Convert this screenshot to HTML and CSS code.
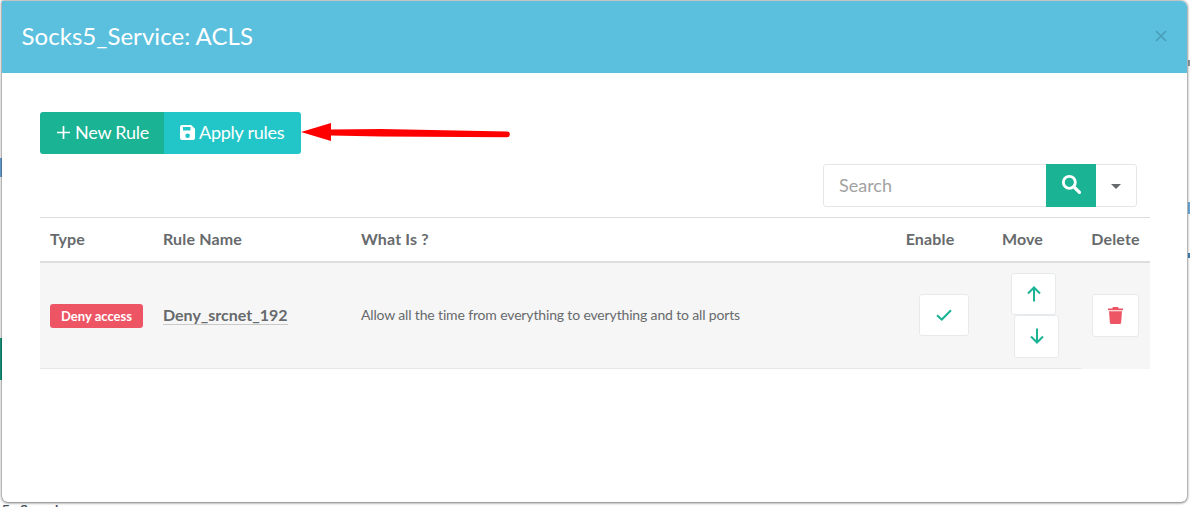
FILE: index.html
```html
<!DOCTYPE html>
<html lang="en">
<head>
<meta charset="utf-8">
<title>Socks5_Service: ACLS</title>
<link rel="stylesheet" href="styles.css">
</head>
<body>
<div class="backdrop" aria-hidden="true">
  <i class="strip s-green"></i>
  <i class="strip s-blue"></i>
  <i class="strip s-rblue"></i>
  <i class="strip s-rblue2"></i>
  <i class="strip s-rgray"></i>
  <span class="behind-text">5_Service</span>
</div>
<div class="modal">
  <header class="modal-head">
    <h4 class="modal-title">Socks5_Service: ACLS</h4>
    <span class="close" aria-label="Close"><svg width="12" height="12" viewBox="0 0 12 12"><path d="M1 1l10 10M11 1L1 11" stroke="#4a9db6" stroke-width="1.6" fill="none"/></svg></span>
  </header>
  <div class="modal-body">
    <div class="actions">
      <button class="btn btn-new"><svg class="ico" width="15" height="15" viewBox="0 0 15 15"><path d="M7.5 1v13M1 7.500h13" stroke="#fff" stroke-width="1.7" fill="none"/></svg>New Rule</button>
      <button class="btn btn-apply"><svg class="ico" width="15" height="15" viewBox="0 0 15 15"><path fill="#fff" fill-rule="evenodd" d="M2 0h9.200L15 3.800V13a2 2 0 0 1-2 2H2a2 2 0 0 1-2-2V2a2 2 0 0 1 2-2zm1 2v3.600h7.500V2zm4.600 6.400a2.300 2.300 0 1 0 0 4.600 2.300 2.300 0 0 0 0-4.600z"/></svg>Apply rules</button>
    </div>
    <div class="toolbar">
      <div class="search">
        <span class="search-input">Search</span>
        <span class="search-btn"><svg width="20" height="20" viewBox="0 0 18 18"><circle cx="7.500" cy="7.500" r="5.400" stroke="#fff" stroke-width="2.600" fill="none"/><path d="M11.600 11.600l5 5" stroke="#fff" stroke-width="3" stroke-linecap="round"/></svg></span>
        <span class="search-drop"><i class="caret"></i></span>
      </div>
    </div>
    <table class="rules">
      <colgroup><col class="c1"><col class="c2"><col class="c3"><col class="c4"><col class="c5"><col class="c6"></colgroup>
      <thead>
        <tr><th>Type</th><th>Rule Name</th><th>What Is ?</th><th class="ctr th-enable">Enable</th><th class="ctr th-move">Move</th><th class="ctr">Delete</th></tr>
      </thead>
      <tbody>
        <tr>
          <td><span class="label">Deny access</span></td>
          <td><a class="rule-name">Deny_srcnet_192</a></td>
          <td class="desc">Allow all the time from everything to everything and to all ports</td>
          <td class="ctr"><span class="sq sq-en"><svg width="16" height="12" viewBox="0 0 16 12"><path d="M1 6.200l4.800 4.300L15 1.200" stroke="#1ab394" stroke-width="2" fill="none"/></svg></span></td>
          <td class="move">
            <span class="sq sq-up"><svg width="14" height="16" viewBox="0 0 14 16"><path d="M7 15.500V1.800M1 7.500l6-6 6 6" stroke="#1ab394" stroke-width="2" fill="none"/></svg></span>
            <span class="sq sq-down"><svg width="14" height="16" viewBox="0 0 14 16"><path d="M7 .5v13.700M1 8.500l6 6 6-6" stroke="#1ab394" stroke-width="2" fill="none"/></svg></span>
          </td>
          <td class="ctr"><span class="sq sq-del"><svg width="15" height="17" viewBox="0 0 15 17"><path fill="#ed5565" d="M5 0h5l.8 1.400H15v1.800H0V1.400h4.200zM1 4.300h13l-.9 11.400a1.400 1.400 0 0 1-1.400 1.300H3.300a1.400 1.400 0 0 1-1.400-1.300z"/></svg></span></td>
        </tr>
      </tbody>
    </table>
  </div>
  <svg class="arrow" width="210" height="26" viewBox="0 0 210 26"><path d="M0 12L30 3v6.500L80 9l126 2.400a2.900 2.900 0 0 1 0 5.800L80 16.500 30 15.500V21z" fill="#ff0000"/></svg>
</div>
</body>
</html>
```
FILE: styles.css
```css
* { box-sizing: border-box; }
html, body { margin: 0; padding: 0; }
body {
  position: relative;
  background: #fff;
  font-family: Lato, "Open Sans", "Liberation Sans", sans-serif;
  color: #676a6c;
  height: 507px;
  overflow: hidden;
}
.backdrop { position: absolute; inset: 0; overflow: hidden; }
.strip { position: absolute; display: block; }
.s-green { left: 0; top: 338px; width: 2px; height: 42px; background: #1a9f85; }
.s-blue { left: 0; top: 158px; width: 2px; height: 19px; background: #6fa8dc; }
.s-rblue { right: 0; top: 202px; width: 2px; height: 12px; background: #6fa8dc; }
.s-rblue2 { right: 0; top: 253px; width: 2px; height: 5px; background: #3f7fb5; }
.s-rgray { right: 0; top: 60px; width: 2px; height: 6px; background: #8a99a3; }
.behind-text {
  position: absolute;
  left: 1px;
  top: 500px;
  font-size: 16px;
  line-height: 20px;
  letter-spacing: 1px;
  color: #44505a;
}
.modal {
  position: relative;
  margin: 1px 3px 0 2px;
  height: 501px;
  background: #fff;
  border-radius: 0 6px 6px 6px;
  box-shadow: 0 0 3px rgba(0, 0, 0, .55), 0 1px 3px rgba(0, 0, 0, .35);
  overflow: hidden;
}
.modal-head {
  height: 72px;
  background: #5bc0de;
  display: flex;
  align-items: center;
  justify-content: space-between;
  padding: 0 20px 0 19.500px;
}
.modal-title {
  margin: -2px 0 0;
  font-size: 24px;
  font-weight: 400;
  line-height: 72px;
  letter-spacing: .05px;
  color: #fff;
}
.close { display: flex; margin-top: -3px; margin-right: 0; }
.modal-body { padding: 39px 37px 0 38px; }
.actions { display: flex; height: 42px; }
.btn {
  border: 0;
  height: 42px;
  color: #fff;
  font: 400 18px Lato, sans-serif;
  letter-spacing: -.25px;
  display: flex;
  align-items: center;
  padding: 0 0 2px;
}
.ico { margin-right: 4px; margin-top: 1px; }
.btn-new { background: #1ab394; width: 124px; border-radius: 3px 0 0 3px; padding-left: 16px; }
.btn-apply { background: #23c6c8; width: 137px; border-radius: 0 3px 3px 0; padding-left: 16px; }
.toolbar { display: flex; justify-content: flex-end; margin: 10px 13px 10px 0; }
.search {
  display: flex;
  width: 314px;
  height: 43px;
  border: 1px solid #e5e6e7;
  border-radius: 3px;
}
.search-input {
  width: 222px;
  padding-left: 15px;
  font-size: 18px;
  line-height: 41px;
  color: #a2a2a2;
}
.search-btn {
  width: 50px;
  height: 43px;
  margin-top: -1px;
  background: #1ab394;
  display: flex;
  align-items: center;
  justify-content: center;
  padding-bottom: 3px;
}
.search-drop { flex: 1; display: flex; align-items: center; justify-content: center; }
.caret {
  width: 0;
  height: 0;
  border-left: 5px solid transparent;
  border-right: 5px solid transparent;
  border-top: 5px solid #676a6c;
  margin-top: 1px;
}
.rules {
  width: 1110px;
  table-layout: fixed;
  border-collapse: separate;
  border-spacing: 0;
}
.c1 { width: 113px; }
.c2 { width: 198px; }
.c3 { width: 534px; }
.c4 { width: 91px; }
.c5 { width: 105px; }
.c6 { width: 69px; }
.rules th {
  height: 46px;
  padding: 0 10px 3px;
  border-top: 1px solid #dddddd;
  border-bottom: 2px solid #dddddd;
  font-size: 16px;
  font-weight: 700;
  letter-spacing: .15px;
  text-align: left;
  white-space: nowrap;
}
.rules th.ctr { text-align: center; padding: 0 0 3px; }
.rules th.th-enable { padding-right: 1px; }
.rules th.th-move { padding-right: 12px; }
.rules td {
  height: 106px;
  padding: 0 10px 4px;
  background: #f6f6f6;
  box-shadow: inset 0 -1px 0 #e7e7e7;
  vertical-align: middle;
}
.rules td.ctr, .rules td.move { padding: 0 0 2px; text-align: center; }
.rules td:last-child { box-shadow: none; }
.label {
  display: inline-block;
  width: 93px;
  height: 24px;
  background: #ed5565;
  color: #fff;
  border-radius: 3px;
  font-size: 13px;
  font-weight: 700;
  line-height: 24px;
  text-align: center;
  margin-top: 4px;
  white-space: nowrap;
}
.rule-name {
  font-size: 16px;
  font-weight: 700;
  border-bottom: 1px solid #c9c9c9;
  white-space: nowrap;
}
.desc { font-size: 14px; letter-spacing: -.15px; white-space: nowrap; }
.sq {
  display: flex;
  align-items: center;
  justify-content: center;
  background: #fff;
  border: 1px solid #e7eaec;
  border-radius: 3px;
}
.sq-en { width: 50px; height: 42px; margin: 0 0 0 34px; }
.sq-del { width: 47px; height: 43px; margin: 0 0 0 11px; }
.sq-up { width: 45px; height: 42px; margin-left: 35px; }
.sq-down { width: 45px; height: 43px; margin-left: 38px; }
.arrow { position: absolute; left: 299px; top: 119px; }
```
